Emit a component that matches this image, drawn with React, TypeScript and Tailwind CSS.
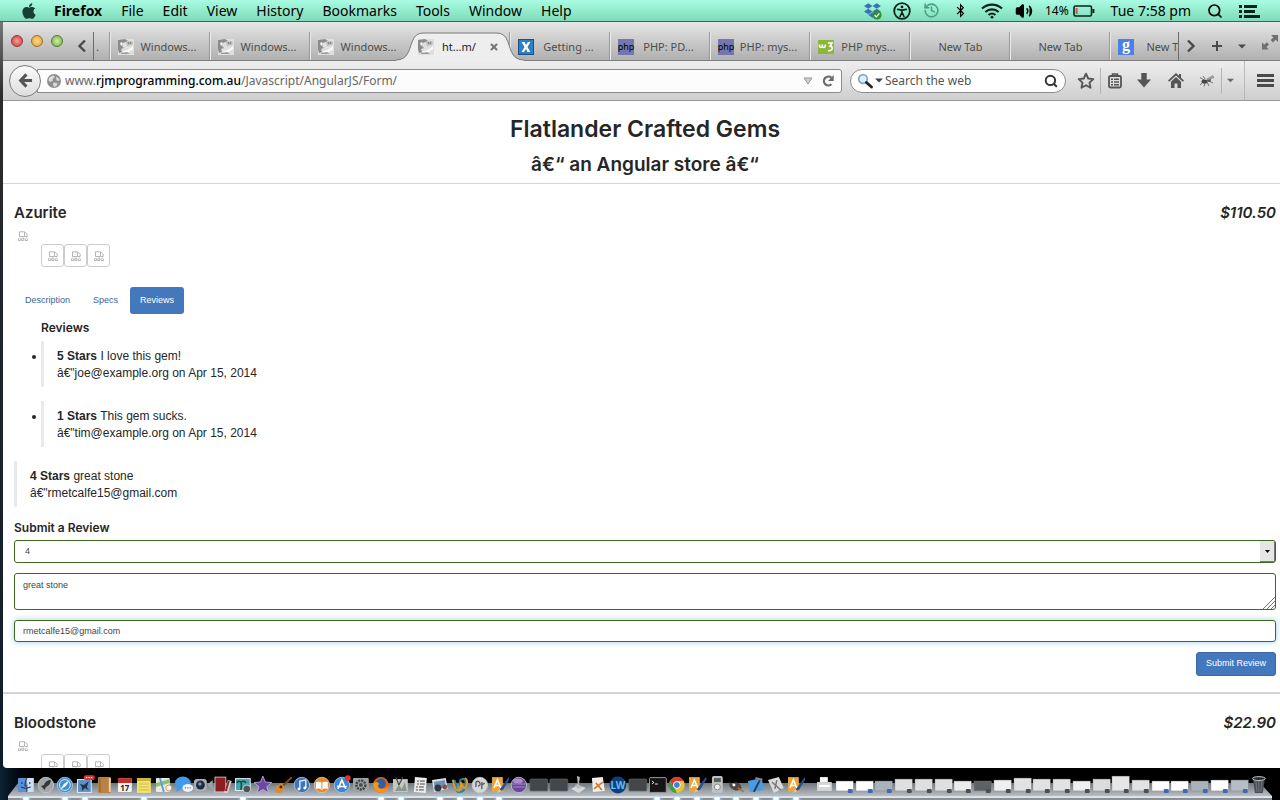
import { ReactNode, useState } from 'react'
import { FaApple, FaBluetoothB, FaDropbox } from 'react-icons/fa'
import { History, Search, Volume2, X } from 'lucide-react'

const menus = ['File', 'Edit', 'View', 'History', 'Bookmarks', 'Tools', 'Window', 'Help']

type TabInfo = { title: string; icon?: string; active?: boolean }

const tabs: TabInfo[] = [
  { title: 'Windows...', icon: 'photo' },
  { title: 'Windows...', icon: 'photo' },
  { title: 'Windows...', icon: 'photo' },
  { title: 'ht…m/', icon: 'photo', active: true },
  { title: 'Getting ...', icon: 'x' },
  { title: 'PHP: PD...', icon: 'php' },
  { title: 'PHP: mys...', icon: 'php' },
  { title: 'PHP mys...', icon: 'w3' },
  { title: 'New Tab' },
  { title: 'New Tab' },
  { title: 'New Tab', icon: 'google' },
]

function MenuBar() {
  return (
    <header className="relative z-10 flex h-[22px] shrink-0 items-center justify-between border-b border-[#2f6b57] bg-linear-to-b from-[#a9fce2] to-[#7edcb9] pr-5 pl-5 text-[14px] text-black">
      <nav className="flex items-center gap-[19px]">
        <FaApple className="size-[18px] text-[#173f33]" />
        <a href="#" className="-ml-[3px] font-bold">
          Firefox
        </a>
        {menus.map((menu) => (
          <a href="#" key={menu}>
            {menu}
          </a>
        ))}
      </nav>
      <div className="flex items-center gap-3">
        <span className="relative">
          <FaDropbox className="size-[17px] text-[#3a72b8]" />
          <svg viewBox="0 0 10 10" className="absolute -right-px -bottom-px size-[10px]">
            <circle cx="5" cy="5" r="4.6" fill="#2f9136" />
            <path d="M2.6 5.2l1.8 1.7 3-3.6" fill="none" stroke="#fff" strokeWidth="1.3" />
          </svg>
        </span>
        <svg viewBox="0 0 18 18" className="size-[18px]" fill="none" stroke="#08241a">
          <circle cx="9" cy="9" r="7.8" strokeWidth="1.8" />
          <circle cx="9" cy="4.9" r="1.4" fill="#08241a" stroke="none" />
          <path d="M4.6 7.4L9 8.1l4.4-.7M9 8v3M9 10.4l-2 4.1M9 10.4l2 4.1" strokeWidth="1.6" strokeLinecap="round" />
        </svg>
        <History className="size-[17px] text-[#4f9c82]" strokeWidth={2.2} />
        <FaBluetoothB className="mx-1 h-[15px] w-[9px]" />
        <svg viewBox="0 0 22 16" className="h-4 w-[22px]" fill="none" stroke="#08241a" strokeWidth="2.1">
          <path d="M1 5.6a14.5 14.5 0 0 1 20 0M4.4 9a9.6 9.6 0 0 1 13.2 0M7.6 12a5 5 0 0 1 6.8 0" />
          <circle cx="11" cy="14.2" r="1.4" fill="#08241a" stroke="none" />
        </svg>
        <Volume2 className="size-[18px]" fill="currentColor" strokeWidth={2} />
        <span className="mr-1 flex items-center gap-1">
          <span className="text-[12px]">14%</span>
          <svg viewBox="0 0 22 12" className="h-3 w-[22px]" fill="none">
            <rect x="1" y="1" width="17.5" height="10" rx="1.6" stroke="#08241a" strokeWidth="1.6" />
            <path d="M20.4 4v4" stroke="#08241a" strokeWidth="2" />
            <path d="M3.6 3v6" stroke="#d9534f" strokeWidth="2" />
          </svg>
        </span>
        <span className="mr-1">Tue 7:58 pm</span>
        <Search className="mr-1 size-4" strokeWidth={2.6} />
        <svg viewBox="0 0 21 14" className="h-[14px] w-[21px]" fill="#08241a">
          <path d="M0 1h3v3H0zM5 1h13v3H5zM0 6h3v3H0zM5 6h11v3H5zM0 11h3v3H0zM5 11h16v3H5z" />
        </svg>
      </div>
    </header>
  )
}

function Favicon({ name }: { name: string }) {
  if (name === 'x') {
    return (
      <svg viewBox="0 0 16 16" className="size-4 shrink-0">
        <rect x=".5" y=".5" width="15" height="15" fill="#2d7fc4" stroke="#1d4f86" />
        <path d="M3.5 3h3L8 6l2-3h2.5L9.4 8l3.1 5h-3L8 10l-2 3H3.5l3.1-5z" fill="#fff" />
      </svg>
    )
  }
  if (name === 'php') {
    return (
      <span className="flex size-4 shrink-0 items-center justify-center bg-[#7377ad] text-[9px] leading-4 text-black">
        php
      </span>
    )
  }
  if (name === 'w3') {
    return (
      <svg viewBox="0 0 16 16" className="size-4 shrink-0">
        <rect y="1" width="16" height="14" fill="#8cb83a" />
        <path
          d="M1.5 5.5v1.6q0 1.4 1.4 1.4t1.4-1.4V5.5v1.6q0 1.4 1.4 1.4t1.6-1.4V5.5M10 4h4l-2 3q2.4.3 2.2 2.4Q13.8 12 10 11.7"
          fill="none"
          stroke="#fff"
          strokeWidth="1.6"
        />
      </svg>
    )
  }
  if (name === 'google') {
    return (
      <span className="flex size-4 shrink-0 items-center justify-center bg-[#4c7fe8] pb-1 font-['Liberation_Serif',serif] text-[16px] leading-3 font-bold text-white">
        g
      </span>
    )
  }
  return (
    <svg viewBox="0 0 16 16" className="size-4 shrink-0">
      <rect width="16" height="16" fill="#dfe0de" />
      <path d="M0 1l7-1 3 2-5 2-1 3 2 2-3 1 1 3-3 1-1-4z" fill="#8a8c8c" />
      <path d="M2 4l2-1 1 2-2 2z" fill="#f4f4f4" />
      <path d="M8 3q4-2 7 0l-1 3-5 1z" fill="#bcbebb" />
      <path d="M10 3l1 2M13 3l-1 2" stroke="#666" strokeWidth=".8" />
      <path d="M5 12q5 0 10-5v3q-5 4-9 5z" fill="#fafafa" />
      <path d="M3 14l6-1 3 2H3z" fill="#9b9d9b" />
    </svg>
  )
}

function BrowserTab({ title, icon, active }: TabInfo) {
  if (active) {
    return (
      <div className="relative z-10 flex h-7 w-[100px] shrink-0 items-center gap-2 px-2 pt-[2px] text-[11px] text-[#222]">
        <svg viewBox="0 0 128 29" className="absolute top-0 -left-[14px] -z-10 h-[29px] w-[128px]">
          <path d="M0 28C12 28 13 18 16 10Q19 1 27 1H101Q109 1 112 10C115 18 116 28 128 28V29H0Z" fill="#eeeeee" />
          <path d="M0 28C12 28 13 18 16 10Q19 1 27 1H101Q109 1 112 10C115 18 116 28 128 28" fill="none" stroke="#7c7c7c" />
        </svg>
        <Favicon name={icon!} />
        <a href="#" className="flex-1">
          {title}
        </a>
        <button aria-label="Close tab" className="mr-[3px]">
          <X className="size-[10px] text-[#777]" strokeWidth={5} />
        </button>
      </div>
    )
  }
  return (
    <a
      href="#"
      className="flex h-7 w-[100px] shrink-0 items-center border-l border-[#ececec] px-[7px] pt-[2px] text-[11px] text-[#4d4d4d] shadow-[-1px_0_0_#9a9a9a]"
    >
      {icon && <Favicon name={icon} />}
      <span className="flex-1 text-center whitespace-nowrap">{title}</span>
    </a>
  )
}

function TabStrip() {
  return (
    <div className="flex h-[39px] items-end border-b border-[#7c7c7c] bg-linear-to-b from-[#e6e6e6] to-[#b0b0b0]">
      <div className="flex h-full items-start gap-2 px-2 pt-[13px]">
        <button aria-label="Close" className="size-3 rounded-full border border-[#8c3a3a] bg-radial from-[#ff9a94] to-[#c8323a]" />
        <button aria-label="Minimise" className="size-3 rounded-full border border-[#9a6f2c] bg-radial from-[#ffdc8a] to-[#e09a2c]" />
        <button aria-label="Zoom" className="size-3 rounded-full border border-[#53792f] bg-radial from-[#cdeea0] to-[#76b03a]" />
      </div>
      <button aria-label="Scroll tabs left" className="flex h-7 w-[22px] items-center justify-center">
        <svg viewBox="0 0 10 14" className="h-[14px] w-[10px]" fill="none" stroke="#4a4a4a" strokeWidth="2.4">
          <path d="M8 1.5L2.5 7L8 12.5" />
        </svg>
      </button>
      <div className="-mb-px flex h-[29px] min-w-0 flex-1 overflow-hidden border-x border-[#6d6d6d]">
        <span className="flex h-7 w-4 shrink-0 items-center pt-[2px] pl-[2px] text-[11px] text-[#4d4d4d]">.</span>
        {tabs.map((tab, i) => (
          <BrowserTab key={i} {...tab} />
        ))}
      </div>
      <div className="flex h-7 shrink-0 items-center gap-4 pr-[2px] pl-[7px] text-[#4a4a4a]">
        <button aria-label="Scroll tabs right">
          <svg viewBox="0 0 10 14" className="h-[14px] w-[10px]" fill="none" stroke="currentColor" strokeWidth="2.4">
            <path d="M2 1.5L7.5 7L2 12.5" />
          </svg>
        </button>
        <button aria-label="New tab">
          <svg viewBox="0 0 10 10" className="size-[10px]" stroke="currentColor" strokeWidth="2">
            <path d="M5 0v10M0 5h10" />
          </svg>
        </button>
        <button aria-label="List all tabs">
          <svg viewBox="0 0 8 5" className="h-[5px] w-2" fill="currentColor">
            <path d="M0 .5h8L4 4.5z" />
          </svg>
        </button>
        <button aria-label="Full screen" className="pb-2">
          <svg viewBox="0 0 16 16" className="size-4" fill="#707070">
            <path d="M9 1h7v7l-2.4-2.3L11 8.4 8.7 6l2.700-2.600zM0 8.500l2.400 2.300L4.800 8.300 7 10.500l-2.600 2.600L6.800 15.500H0z" />
          </svg>
        </button>
      </div>
    </div>
  )
}

function Divider() {
  return <span className="h-[26px] w-px bg-[#b3b3b3]" />
}

function ToolButton({ label, children }: { label: string; children: ReactNode }) {
  return (
    <button aria-label={label} className="flex w-8 items-center justify-center text-[#555]">
      {children}
    </button>
  )
}

function Toolbar() {
  return (
    <div className="flex h-10 items-center border-b border-[#9a9a9a] bg-linear-to-b from-[#eeeeee] to-[#cfcfcf] pr-1 pl-[6px]">
      <button
        aria-label="Back"
        className="z-10 flex size-8 shrink-0 items-center justify-center rounded-full border border-[#7d7d7d] bg-linear-to-b from-[#fbfbfb] to-[#dedede]"
      >
        <svg viewBox="0 0 16 16" className="size-[15px]" fill="none" stroke="#555" strokeWidth="3.2">
          <path d="M9 1.5L2.8 8L9 14.5M3 8h12" />
        </svg>
      </button>
      <div className="-ml-1 flex h-6 flex-1 items-center rounded-r-[3px] border border-[#8c8c8c] bg-[#fcfcfc] pr-[6px] pl-[9px]">
        <svg viewBox="0 0 14 14" className="mr-1 size-[14px] shrink-0">
          <circle cx="7" cy="7" r="7" fill="#8f8f8f" />
          <path d="M2 4q2-2.5 4.5-2.5L8 3 5.500 5l.5 1.500L3.500 8 1.500 6.500zM9 2.500L12.500 5l-.5 2-2.500-.5zM6.500 8.500l4 .5-1 3-2.500 1-1-2.500z" fill="#dcdcdc" />
        </svg>
        <div className="flex-1 text-[12px] text-[#666]">
          www.<span className="font-medium text-black">rjmprogramming.com.au</span>/Javascript/AngularJS/Form/
        </div>
        <svg viewBox="0 0 10 8" className="mr-2 h-2 w-[10px]">
          <path d="M1 1h8L5 7z" fill="#ccc" stroke="#999" />
        </svg>
        <button aria-label="Reload">
          <svg viewBox="0 0 14 14" className="size-[14px]">
            <path d="M10.5 10.3a4.5 4.5 0 1 1 0-6.600" fill="none" stroke="#6a6a6a" strokeWidth="2.2" />
            <path d="M12.7 1v6H7z" fill="#6a6a6a" />
          </svg>
        </button>
      </div>
      <label className="ml-2 flex h-6 w-[216px] shrink-0 items-center rounded-full border border-[#8c8c8c] bg-white pr-[7px] pl-[6px]">
        <svg viewBox="0 0 16 16" className="size-4" fill="none">
          <circle cx="6" cy="6" r="4.3" fill="#e3eefc" stroke="#7fa3d4" strokeWidth="1.7" />
          <path d="M9.5 9.5l5 4.5" stroke="#222" strokeWidth="2.8" strokeLinecap="round" />
        </svg>
        <svg viewBox="0 0 8 5" className="mx-[2px] h-[5px] w-2 shrink-0" fill="#444">
          <path d="M0 .5h8L4 4.5z" />
        </svg>
        <input
          aria-label="Search the web"
          placeholder="Search the web"
          className="min-w-0 flex-1 text-[12px] text-black outline-none placeholder:text-[#555]"
        />
        <Search className="size-[14px] text-[#333]" strokeWidth={3.4} />
      </label>
      <div className="flex shrink-0 items-center pl-[5px]">
        <button aria-label="Bookmark this page" className="flex w-[29px] items-center justify-center">
          <svg viewBox="0 0 18 18" className="size-[18px]" fill="none" stroke="#555" strokeWidth="1.9" strokeLinejoin="round">
            <path d="M9 1.7l2.2 4.8 5.1.6-3.8 3.5 1 5.2L9 13.200l-4.500 2.600 1-5.200L1.700 7.100l5.100-.6z" />
          </svg>
        </button>
        <Divider />
        <button aria-label="Bookmarks" className="flex w-[27px] items-center justify-center">
          <svg viewBox="0 0 14 16" className="h-4 w-[14px]" fill="none" stroke="#555" strokeWidth="1.8">
            <rect x="1" y="3" width="12" height="11.5" rx="1.5" />
            <path d="M4.5 3V1h5v2M3 6.3h2M6 6.3h5M3 9h2M6 9h5M3 11.7h2M6 11.7h5" strokeWidth="1.5" />
          </svg>
        </button>
        <ToolButton label="Downloads">
          <svg viewBox="0 0 14 15" className="h-[15px] w-[14px]" fill="currentColor">
            <path d="M4.3 0h5.4v6.5H14L7 14.5 0 6.500h4.300z" />
          </svg>
        </ToolButton>
        <ToolButton label="Home">
          <svg viewBox="0 0 16 15" className="h-[15px] w-4" fill="currentColor">
            <path d="M8 0L0 7.5l1.2 1.2L8 2.4l6.8 6.3L16 7.500l-3-2.800V1h-2v1.800zM8 4L3 8.700V15h3.500v-4.500h3V15H13V8.700z" />
          </svg>
        </ToolButton>
        <button aria-label="Firebug" className="flex w-[29px] items-center justify-center">
          <svg viewBox="0 0 16 12" className="h-3 w-4" fill="none" stroke="#555">
            <path d="M5 5L1 2.5M6 4L4 1M8 7l2 4M6 8l-1 3.5M4 7l-3 3M10 6l4 2" strokeWidth=".8" />
            <ellipse cx="5.5" cy="6.5" rx="3" ry="2" fill="#444" stroke="none" />
            <circle cx="10" cy="5" r="2" fill="#555" stroke="none" />
            <path d="M7 4l7-4L15.5 3 9 5z" fill="#9c9c9c" stroke="none" />
          </svg>
        </button>
        <Divider />
        <button aria-label="Add-on options" className="flex w-4 justify-center">
          <svg viewBox="0 0 8 5" className="h-[5px] w-[7px]" fill="#666">
            <path d="M0 .5h8L4 4.5z" />
          </svg>
        </button>
        <span className="ml-[6px] h-[39px] w-px bg-[#b9b9b9]" />
        <button aria-label="Open menu" className="ml-3 flex w-[19px]">
          <svg viewBox="0 0 17 13" className="h-[13px] w-[17px]" fill="#4a4a4a">
            <path d="M0 0h17v3H0zM0 5h17v3H0zM0 10h17v3H0z" />
          </svg>
        </button>
      </div>
    </div>
  )
}

function BrokenImage() {
  return (
    <svg viewBox="0 0 10 10" className="size-[10px]" fill="none" stroke="#b5b5b5">
      <path d="M1.5 5.5V.8h5v4.7zM6.5 1.5h1.3L9.2 3v2.500H7" />
      <path d="M.5 9.5V8l1-1 1.2 1v1.5zM3.8 7.2h2v2.3h-2zM7.2 9.5V8.2L8.4 7l1.2 1.2v1.3z" />
    </svg>
  )
}

// heavier face used for all headings of the store
const heading = "font-['Inter','Liberation_Sans',sans-serif] font-semibold"

function Gem({ name, price, children }: { name: string; price: string; children?: ReactNode }) {
  return (
    <section>
      <div className={`flex items-center justify-between text-[15px] leading-6 ${heading}`}>
        <h3>{name}</h3>
        <em>{price}</em>
      </div>
      <div className="mt-[6px] ml-1">
        <BrokenImage />
      </div>
      <ul className="mt-[3px] ml-[27px] flex">
        {[1, 2, 3].map((n) => (
          <li key={n} className="flex h-[23px] w-[23px] items-center justify-center rounded-[3px] border border-[#ccc]">
            <BrokenImage />
          </li>
        ))}
      </ul>
      {children}
    </section>
  )
}

function Review({ stars, body, author }: { stars: string; body: string; author: string }) {
  return (
    <blockquote className="mb-[14px] border-l-[3px] border-[#eaeaea] pt-[7px] pb-[5px] pl-[13px] leading-[17px]">
      <b>{stars} Stars</b> {body}
      <cite className="block not-italic">â€"{author}</cite>
    </blockquote>
  )
}

const field =
  'block w-full rounded-[3px] border border-[#3c6b1f] bg-white px-2 text-[9px] text-[#444] outline-none'

const bullet =
  'relative before:absolute before:top-[14px] before:-left-[9px] before:size-1 before:rounded-full before:bg-[#262626]'

function Store() {
  const [stars, setStars] = useState('4')
  const [body, setBody] = useState('great stone')
  const [author, setAuthor] = useState('rmetcalfe15@gmail.com')

  return (
    <main className="min-h-0 flex-1 overflow-hidden rounded-bl-[4px] bg-white font-['Liberation_Sans',sans-serif] text-[12px] text-[#262626]">
      <div className={`pt-3 pr-1 pb-[3px] pl-[11px] text-center ${heading}`}>
        <h1 className="text-[23px] leading-8">Flatlander Crafted Gems</h1>
        <h2 className="mt-[5px] text-[19px] leading-[30px]">â€“ an Angular store â€“</h2>
      </div>
      <div className="border-t border-[#d4d4d4] pt-[17px] pr-1 pb-4 pl-[11px]">
        <Gem name="Azurite" price="$110.50">
          <div className="mt-5 flex h-[27px] gap-[2px] text-[9px] text-[#38649c]">
            <button className="px-[11px]">Description</button>
            <button className="px-[10px]">Specs</button>
            <button className="rounded-[3px] bg-[#4478bd] px-[10px] text-white">Reviews</button>
          </div>
          <h4 className={`mt-[5px] ml-[27px] leading-[18px] ${heading}`}>Reviews</h4>
          <ul className="mt-1 ml-[27px]">
            <li className={bullet}>
              <Review stars="5" body="I love this gem!" author="joe@example.org on Apr 15, 2014" />
            </li>
            <li className={bullet}>
              <Review stars="1" body="This gem sucks." author="tim@example.org on Apr 15, 2014" />
            </li>
          </ul>
          <form onSubmit={(e) => e.preventDefault()}>
            <Review stars={stars} body={body} author={author} />
            <h4 className={`-mt-[2px] mb-[3px] leading-[18px] ${heading}`}>Submit a Review</h4>
            <div className="flex flex-col gap-[10px]">
              <div className="relative">
                <select
                  aria-label="Rate the product"
                  value={stars}
                  onChange={(e) => setStars(e.target.value)}
                  className={`${field} h-[23px] appearance-none pl-[10px]`}
                >
                  {['1', '2', '3', '4', '5'].map((n) => (
                    <option key={n}>{n}</option>
                  ))}
                </select>
                <span className="pointer-events-none absolute top-px right-px bottom-px flex w-[15px] items-center justify-center border-r border-b border-[#777] bg-[#e6e6e6]">
                  <svg viewBox="0 0 5 3" className="h-[3px] w-[5px]">
                    <path d="M0 0h5L2.5 3z" />
                  </svg>
                </span>
              </div>
              <div className="relative">
                <textarea
                  aria-label="Review"
                  value={body}
                  onChange={(e) => setBody(e.target.value)}
                  className={`${field} h-[37px] resize-none py-[5px] leading-[13px]`}
                />
                <svg viewBox="0 0 12 12" className="pointer-events-none absolute right-px bottom-px size-3" stroke="#777">
                  <path d="M0 12L12 0M4 12l8-8M8 12l4-4" />
                </svg>
              </div>
              <input
                type="email"
                aria-label="Email"
                value={author}
                onChange={(e) => setAuthor(e.target.value)}
                className={`${field} h-[22px] shadow-[0_0_6px_#9fcdec]`}
              />
              <button className="h-6 self-end rounded-[3px] border border-[#3b69a8] bg-[#4478bd] px-[9px] text-[9px] text-white">
                Submit Review
              </button>
            </div>
          </form>
        </Gem>
      </div>
      <div className="border-t-2 border-[#d4d4d4] pt-[17px] pr-1 pl-[11px]">
        <Gem name="Bloodstone" price="$22.90" />
      </div>
    </main>
  )
}

function Disc({ fill, children }: { fill: string; children?: ReactNode }) {
  return (
    <>
      <circle cx="10" cy="10" r="7.8" fill={fill} stroke="#c9cdd2" strokeWidth=".8" />
      {children}
    </>
  )
}

const paintbrush = (
  <>
    <rect x="2" y="2" width="11" height="15" fill="#e8a53c" />
    <path d="M4 13L7.5 5l3.5 8M5 10.5h5" fill="none" stroke="#fff" strokeWidth="1.6" />
    <path d="M19 2l-8 11-3 4 5-2 7-11z" fill="#2a4d8f" />
    <path d="M9 14l3 2-5 2z" fill="#d9c7a0" />
  </>
)

const blank = <rect x="1" y="4" width="18" height="12" rx="1" fill="#43474a" stroke="#5c6063" strokeWidth=".8" />

const apps: ReactNode[] = [
  <>
    <rect x="2" y="3" width="16" height="14" rx="1" fill="#5b8fd6" />
    <path d="M10 3h8v14h-7l-1-6h2z" fill="#cfdff2" />
    <path d="M6 7v2M14 7v2M5 12q5 3 10 0M11 3q-2 4-2 8h2v6" fill="none" stroke="#1a2a4a" />
  </>,
  <Disc fill="#a3a6a8">
    <path d="M15 5q-5 0-7 5l-3 1 4 4 1-3q5-2 5-7z" fill="#33373a" />
  </Disc>,
  <Disc fill="#3f8fd6">
    <path d="M15 5l-4 6-2-2zM5 15l4-6 2 2z" fill="#fff" />
    <circle cx="10" cy="10" r="5.5" fill="none" stroke="#cfe6fa" />
  </Disc>,
  <>
    <rect x="2" y="4" width="15" height="14" fill="#e8edf2" />
    <path d="M3 5h13v12H3z" fill="#5d8fc9" />
    <path d="M5 9l4 1 5-4-2 6 2 3-4-2-3 3v-4z" fill="#26344a" />
    <rect x="9" y="0" width="11" height="5" rx="2" fill="#e0332e" />
    <path d="M11 2.5h7" stroke="#fff" strokeDasharray="1.5 1" />
  </>,
  <>
    <rect x="3" y="2" width="13" height="16" rx="1" fill="#b98146" />
    <path d="M14 3h2v14h-2z" fill="#e7d3ae" />
    <path d="M5 3v14" stroke="#8a5a2a" />
  </>,
  <>
    <rect x="3" y="3" width="14" height="14" rx="1" fill="#f4f4f4" />
    <path d="M3 3h14v5H3z" fill="#c4302b" />
    <text x="10" y="16" fontSize="8" fontWeight="700" textAnchor="middle" fill="#222">
      17
    </text>
  </>,
  <>
    <rect x="3" y="3" width="14" height="15" fill="#f3e36a" />
    <path d="M3 3h14v3H3z" fill="#c9b53c" />
    <path d="M5 9h10M5 12h10M5 15h10" stroke="#cbbb50" />
  </>,
  <>
    <rect x="2" y="3" width="14" height="14" rx="1" fill="#e9ecdc" />
    <path d="M2 8l14-4v4L2 12z" fill="#8cc078" />
    <path d="M6 3l4 14" stroke="#5f9fe0" strokeWidth="2" />
    <circle cx="15" cy="13" r="3" fill="#f6f6f6" stroke="#e39a42" />
  </>,
  <>
    <ellipse cx="9" cy="8" rx="8" ry="6.5" fill="#3f9bea" />
    <path d="M3 12l-1 5 5-3z" fill="#3f9bea" />
    <ellipse cx="14" cy="13" rx="5.5" ry="4" fill="#eef4fa" />
    <path d="M11 13h1M13.5 13h1M16 13h1" stroke="#667" strokeWidth="1.2" />
  </>,
  <>
    <rect x="0" y="4" width="13" height="12" rx="3" fill="#a9b0b7" />
    <circle cx="6.5" cy="10" r="4.5" fill="#222b3a" />
    <circle cx="6" cy="9" r="1.8" fill="#6d92c4" />
    <path d="M14 9l5-4v10l-5-4z" fill="#9aa1a8" />
  </>,
  <>
    <rect x="2" y="2" width="11" height="15" fill="#8e1d20" stroke="#ddd" strokeWidth=".8" />
    <path d="M11 18l4-13 4 1-4 12z" fill="#cfcfcf" />
    <path d="M13 16l3-10" stroke="#9a2222" strokeWidth="2" />
  </>,
  <>
    <rect x="2" y="3" width="16" height="13" fill="#e9eef0" />
    <path d="M3 4h14v11H3z" fill="#3fa6ae" />
    <path d="M8 15q1-6 0-8M8 7q-3-2-4 1M8 7q4-2 5 1" fill="none" stroke="#1c4a33" strokeWidth="1.5" />
    <circle cx="14" cy="14" r="4" fill="#4d5358" stroke="#ccc" />
  </>,
  <path
    d="M10 1l2.500 6 6.500.5-5 4.200 1.800 6.300L10 14.500 4.200 18 6 11.700 1 7.500 7.500 7z"
    fill="#6a4aa0"
    stroke="#c9b8ea"
    strokeWidth=".8"
  />,
  <>
    <path d="M19 2L10 11" stroke="#7b4a1f" strokeWidth="2" />
    <path d="M2 14q0-4 4-4l2-2 4 4-2 2q0 4-4 4-4 0-4-4z" fill="#dc8b28" />
    <circle cx="8" cy="12" r="1.5" fill="#3b2411" />
  </>,
  <Disc fill="#3b74bf">
    <path d="M8 14V6l6-1v8" fill="none" stroke="#dbe9fa" strokeWidth="1.5" />
    <circle cx="7" cy="14" r="1.5" fill="#fff" />
    <circle cx="13" cy="13" r="1.5" fill="#fff" />
  </Disc>,
  <Disc fill="#ea8b2a">
    <path d="M4 7q4-1 6 1 2-2 6-1v7q-4-1-6 1-2-2-6-1z" fill="#fff" />
    <path d="M10 8v6" stroke="#ea8b2a" />
  </Disc>,
  <Disc fill="#3d86d8">
    <path d="M6 14l4-9 4 9M5 11.5h10" fill="none" stroke="#fff" strokeWidth="1.6" />
    <circle cx="16" cy="3" r="3" fill="#dd332e" />
  </Disc>,
  <>
    <rect x="2" y="3" width="16" height="14" rx="1" fill="#9fa2a4" />
    <circle cx="10" cy="10" r="4.5" fill="none" stroke="#3f4244" strokeWidth="2.5" strokeDasharray="2 1" />
    <circle cx="10" cy="10" r="2" fill="#4c5052" />
  </>,
  <>
    <circle cx="10" cy="10" r="8" fill="#e2621b" />
    <circle cx="10" cy="8.5" r="5" fill="#2d5fa8" />
    <path d="M2 8q0 10 9 10 6-1 7-8-2 4-6 4-5 0-5-4l2-1-3-2z" fill="#f0951f" />
  </>,
  <>
    <rect x="2" y="4" width="15" height="13" fill="#c4cac2" />
    <path d="M4 16l4-6 3 4 3-7 2 9z" fill="#8b9788" />
    <path d="M5 2l3 8M12 2L8 10" stroke="#444" strokeWidth="1.2" />
  </>,
  <>
    <path d="M4 2l12 1-1 15-12-1z" fill="#ececec" />
    <path d="M6 6h8M6 9h8M5 12h8M5 15h8" stroke="#444" strokeDasharray="2 1 8" />
  </>,
  <>
    <path d="M2 5l14-2 2 11-14 3z" fill="#d9dfe6" />
    <path d="M4 7l11-2 1 7-11 3z" fill="#6f8fb8" />
    <circle cx="8" cy="13" r="3.5" fill="#33383d" />
    <circle cx="15" cy="12" r="2.5" fill="#8c5040" />
  </>,
  <>
    <path d="M2 6q4-2 4 5t4 6q5 0 6-8 0-5-3-5-4 0-3 6" fill="none" stroke="#1d86a8" strokeWidth="2" />
    <path d="M3 5q2 11 6 11 3-2 2-9 4 11 6 2 1-5-2-6" fill="none" stroke="#e09a24" strokeWidth="2" />
  </>,
  <Disc fill="#d4d6d7">
    <path d="M6 12V7q3-2 4 1t-2 3M12 7v7M12 10l3-2" fill="none" stroke="#555" strokeWidth="1.3" />
  </Disc>,
  paintbrush,
  <Disc fill="#6d4799">
    <path d="M3 9h14M4 12h12" stroke="#cdb6e6" strokeWidth=".6" />
    <ellipse cx="9" cy="6" rx="5" ry="2.5" fill="#a98cc9" />
  </Disc>,
  blank,
  blank,
  <>
    <path d="M2 14l7-4 8 3-7 5z" fill="#d5d7d9" />
    <path d="M8 1l3 1-1 8 4 2-5 2-3-4 3-1z" fill="#b8bbbd" />
  </>,
  <>
    <path d="M4 3l11-1 2 14-12 1z" fill="#f1efe8" />
    <path d="M6 14l9-7M8 8l6 7" stroke="#d0772c" strokeWidth="1.7" />
  </>,
  <>
    <circle cx="10" cy="10" r="8.5" fill="#0f3f7a" />
    <text x="10" y="14" fontSize="10" fontWeight="700" textAnchor="middle" fill="#5ec0f5">
      LW
    </text>
  </>,
  blank,
  <>
    <rect x="1.5" y="2.5" width="17" height="15" rx="1" fill="#151515" stroke="#999" />
    <path d="M4 6l2 1.5L4 9M7 9h3" fill="none" stroke="#ddd" />
  </>,
  <>
    <circle cx="10" cy="10" r="8" fill="#f0c32e" />
    <path d="M3 6a8 8 0 0 1 14 0h-7L6 11z" fill="#d93c2e" />
    <path d="M3 6l4 6 3 6a8 8 0 0 1-7-12z" fill="#3e9c4c" />
    <circle cx="10" cy="10" r="3.5" fill="#3f82de" stroke="#fff" />
  </>,
  paintbrush,
  <>
    <rect x="5" y="1" width="11" height="17" rx="2" fill="#bfc1c3" />
    <rect x="7" y="3" width="7" height="4" fill="#55605a" />
    <circle cx="10.5" cy="12" r="3" fill="#ececec" stroke="#888" />
  </>,
  <>
    <path d="M3 7l3 2q4-3 8 0l2 4q-3 4-8 2-5-2-5-8z" fill="#4d463d" />
    <circle cx="8" cy="10" r="1.5" fill="#fff" />
    <path d="M12 13l6 4" stroke="#b57230" strokeWidth="1.6" />
  </>,
  <>
    <path d="M2 6l14-3 2 12-14 2z" fill="#4a9be6" />
    <path d="M15 3l-7 14" stroke="#333b44" strokeWidth="2" />
    <path d="M10 2l7 2-1 2-7-2z" fill="#7c848c" />
  </>,
  <>
    <path d="M2 5l11-3 5 11-10 5z" fill="#d9dadb" />
    <path d="M6 7l9 8M11 5l-2 9" stroke="#777" strokeWidth="1.5" />
  </>,
  paintbrush,
]

const running = [0, 2, 3, 6, 11, 18, 19, 21, 22, 23, 24, 32, 33, 34, 35, 36, 37, 38, 39]

// minimised windows: fill colour, top edge, badge colour
const minimised: [string, number, string][] = [
  ['#ffffff', 6, '#4467ae'],
  ['#ffffff', 6, '#4467ae'],
  ['#a9b3bc', 6, '#4467ae'],
  ['#dedfe0', 4, '#4b4f52'],
  ['#dedfe0', 4, '#4b4f52'],
  ['#dedfe0', 4, '#4b4f52'],
  ['#ececec', 6, '#4b4f52'],
  ['#5c6165', 6, '#4b4f52'],
  ['#f0f0f0', 5, '#4b4f52'],
  ['#e2e2e2', 3, '#4b4f52'],
  ['#e2e2e2', 4, '#4b4f52'],
  ['#e2e2e2', 4, '#4b4f52'],
  ['#efefef', 6, '#4b4f52'],
  ['#dcdcdc', 4, '#4b4f52'],
  ['#e6e6e6', 1, '#4b4f52'],
  ['#e2e2e2', 5, '#4b4f52'],
  ['#ffffff', 6, '#4467ae'],
  ['#ffffff', 6, '#4467ae'],
  ['#a9b3bc', 6, '#4467ae'],
  ['#ffffff', 5, '#4467ae'],
  ['#b4bec6', 5, '#4467ae'],
]

function DockItem({ children, open }: { children: ReactNode; open?: boolean }) {
  return (
    <li className="relative flex min-w-0 flex-1 justify-center">
      <svg viewBox="0 0 20 20" className="size-5">
        {children}
      </svg>
      {open && (
        <span className="absolute -bottom-[5px] h-[3px] w-[6px] rounded-full bg-white shadow-[0_0_3px_1px_#a6d4f5]" />
      )}
    </li>
  )
}

function Dock() {
  return (
    <footer className="relative h-8 shrink-0 overflow-hidden pr-[11px] pl-4">
      <svg viewBox="0 0 1280 17" preserveAspectRatio="none" className="absolute inset-x-0 bottom-0 h-[17px] w-full">
        <defs>
          <linearGradient id="shelf" x1="0" y1="0" x2="0" y2="1">
            <stop offset="0" stopColor="#6f777e" />
            <stop offset="1" stopColor="#b9bec3" />
          </linearGradient>
        </defs>
        <path d="M18 0H1260L1272 13H8Z" fill="url(#shelf)" />
        <path d="M8 13H1272V15H8Z" fill="#dde2e6" />
        <path d="M8 15H1272V17H8Z" fill="#8b9095" />
      </svg>
      <ul className="relative flex pt-[7px]">
        {apps.map((icon, i) => (
          <DockItem key={i} open={running.includes(i)}>
            {icon}
          </DockItem>
        ))}
        <li className="flex-[0.5]" />
        <DockItem>
          <path d="M5 2h8v5H5z" fill="#fafafa" />
          <path d="M2 7h15v9H2z" fill="#d4d6d8" />
          <path d="M4 10h11v2H4z" fill="#fff" />
        </DockItem>
        {minimised.map(([fill, top, badge], i) => (
          <DockItem key={i}>
            <rect x="1" y={top} width="17.5" height={16 - top} fill={fill} stroke="#888d91" strokeWidth=".4" />
            <rect x="13" y="14" width="5" height="4" rx="1" fill={badge} />
          </DockItem>
        ))}
        <DockItem>
          <path d="M4 4h12l-2 14H6z" fill="#4a4e52" />
          <path d="M7 6l1 11M10 6v11M13 6l-1 11" stroke="#7d8286" strokeWidth=".8" />
          <ellipse cx="10" cy="3.5" rx="6.5" ry="2" fill="#2c2f32" stroke="#c2c6c9" />
        </DockItem>
      </ul>
    </footer>
  )
}

export default function App() {
  return (
    <div className="flex h-screen flex-col overflow-hidden bg-linear-to-r from-[#0f2336] via-black via-3% to-black font-['Noto_Sans',sans-serif]">
      <MenuBar />
      <div className="flex min-h-0 flex-1 flex-col bg-linear-to-b from-[#777] via-[#2b2b2b] via-10% to-[#0d1c2b] pl-[3px]">
        <TabStrip />
        <Toolbar />
        <Store />
      </div>
      <Dock />
    </div>
  )
}
